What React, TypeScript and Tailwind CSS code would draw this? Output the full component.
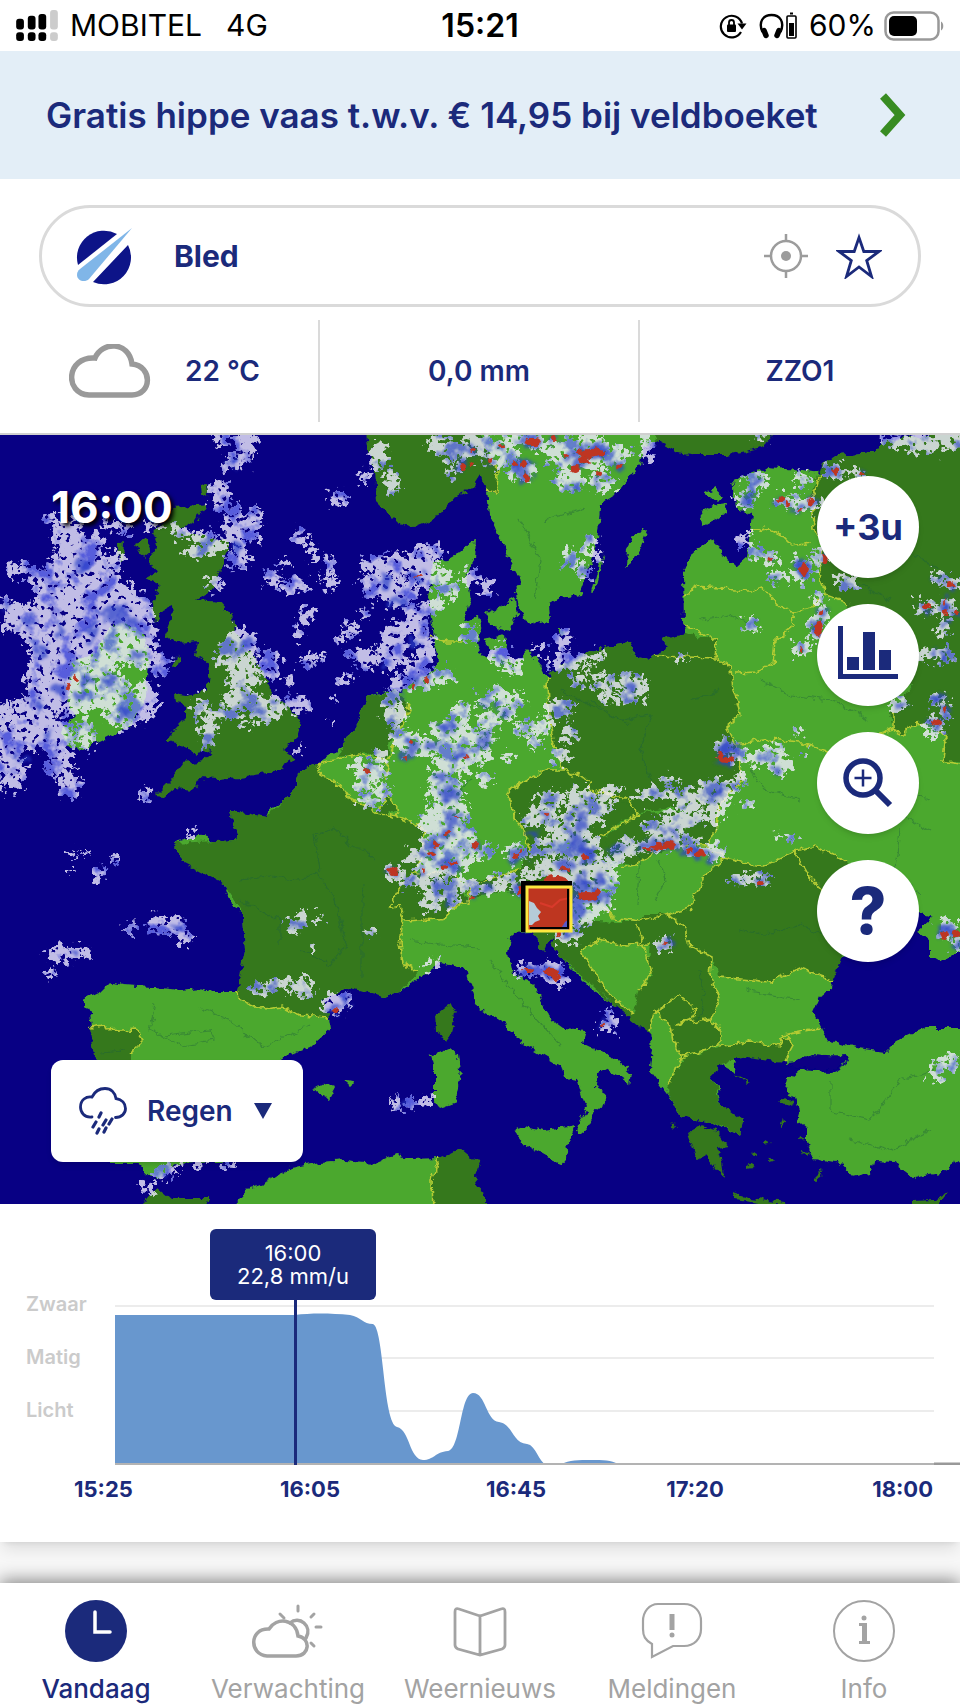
import React, { useState } from "react";

type Blob = [number, number, number, number];

const LAND = "#4ba82f";
const LAND_DARK = "#34781f";

// Coastline of the continent, drawn in map coordinates
const MAINLAND =
  "M990,430 885,440 875,452 840,455 822,462 820,474 795,470 770,467 732,480 735,507 752,515 747,557 737,566 727,560 713,538 692,552 683,573 684,623 687,637 662,639 667,648 650,659 635,657 630,643 607,646 557,668 547,677 542,667 527,650 513,665 503,652 490,657 478,652 474,630 464,620 470,600 466,575 475,560 476,538 460,553 446,561 433,563 428,597 433,630 437,663 433,672 413,683 400,693 388,691 367,697 360,717 347,740 337,752 317,763 298,770 297,787 284,800 270,810 267,817 253,820 242,812 230,810 237,840 213,842 203,835 190,838 173,843 182,862 207,870 216,874 223,883 230,903 243,913 245,950 241,975 237,992 213,992 200,988 180,990 153,987 123,985 110,982 100,992 83,1000 90,1013 93,1035 95,1057 90,1110 110,1163 140,1163 146,1174 157,1179 177,1163 240,1160 265,1110 282,1058 310,1047 330,1030 328,1017 323,1000 347,987 365,990 383,997 400,993 420,978 440,963 455,966 467,973 475,1000 480,1008 500,1020 523,1043 547,1057 562,1066 565,1078 577,1080 582,1096 587,1110 580,1120 577,1132 585,1133 595,1112 607,1103 604,1092 595,1087 596,1074 606,1068 614,1073 630,1085 632,1073 618,1060 583,1043 587,1030 563,1028 552,1020 543,1007 538,990 530,982 512,973 508,953 512,933 533,932 542,952 550,937 560,957 575,972 590,987 612,1003 630,1015 652,1033 652,1050 650,1070 670,1097 680,1117 697,1120 713,1123 722,1128 740,1135 743,1120 730,1112 720,1103 718,1090 713,1077 713,1066 720,1063 736,1072 732,1058 747,1057 780,1055 785,1063 798,1062 813,1055 830,1056 847,1055 850,1062 830,1072 800,1070 788,1080 785,1093 796,1098 800,1110 797,1120 807,1128 807,1143 815,1158 823,1160 840,1163 853,1177 870,1173 873,1162 893,1163 913,1178 940,1173 960,1160 990,1160 990,1028 927,1028 912,1033 897,1040 885,1052 857,1048 830,1042 820,1027 813,1013 820,997 830,990 833,967 842,957 870,950 890,930 920,913 933,917 917,930 930,940 930,957 940,963 957,952 990,952Z";

const LIGHT_ISLANDS = [
  // Scandinavia
  "M480,435 490,463 498,470 497,493 487,492 490,515 502,543 513,567 522,583 515,592 523,618 535,624 550,621 549,604 560,598 580,595 588,573 592,560 597,540 600,510 602,503 615,495 628,480 640,465 643,447 655,440 655,430 480,430Z",
  "M647,530 635,533 627,547 626,567 632,562 641,546Z",
  "M604,553 596,572 591,592 595,590Z",
  "M727,504 712,506 700,513 703,527 714,521 725,513Z",
  "M715,488 705,493 711,497 717,502 723,495Z",
  // Danish islands
  "M500,606 515,598 517,615 510,630 490,625 487,612Z",
  "M462,622 478,617 481,630 476,641 465,638Z",
  "M484,640 505,636 507,648 490,650Z",
  "M557,627 566,631 562,637Z",
  // Ireland
  "M107,630 122,621 143,632 148,660 146,697 137,715 130,727 108,738 83,750 68,745 60,732 76,715 68,705 72,663 95,652Z",
  // Sicily, Sardinia, Balearics
  "M514,1130 522,1127 545,1131 575,1126 567,1145 569,1155 562,1164 548,1158 525,1145Z",
  "M430,1055 440,1052 450,1048 458,1055 460,1070 456,1102 440,1108 434,1100 434,1070Z",
  "M314,1090 326,1083 335,1087 329,1098Z",
  "M343,1080 352,1082 351,1086Z",
  // Algeria
  "M230,1210 250,1188 272,1180 290,1168 320,1162 345,1160 375,1163 395,1155 412,1159 438,1158 432,1180 433,1210Z",
];

const DARK_ISLANDS = [
  "M366,430 368,450 375,470 377,503 397,523 415,527 437,518 453,498 473,487 480,476 487,490 497,493 498,470 490,463 478,430Z",
  "M653,430 655,440 677,452 700,455 727,455 763,447 775,430Z",
  // Great Britain
  "M206,504 190,506 173,508 166,520 152,533 157,547 148,560 157,572 146,578 160,585 152,605 155,625 163,610 172,606 173,618 166,634 178,643 198,641 196,655 210,665 207,690 188,696 175,694 176,704 187,706 187,718 165,740 180,744 196,754 213,750 205,760 183,763 170,780 155,795 165,796 175,788 193,790 200,778 218,779 240,777 267,773 280,768 295,758 283,750 297,737 302,720 283,703 270,697 268,680 253,657 240,637 235,630 233,617 220,602 197,600 213,590 220,570 227,553 230,540 205,538 177,530 195,522Z",
  "M118,545 124,540 123,560 119,562Z",
  "M135,543 146,538 150,550 143,556Z",
  "M176,658 181,657 177,667 172,668Z",
  "M201,485 207,483 208,495 202,497Z",
  // Corsica
  "M452,1003 456,1012 452,1035 446,1043 438,1030 437,1015Z",
  // Tunisia and Morocco
  "M438,1158 450,1153 460,1148 472,1158 480,1160 474,1175 476,1187 486,1195 486,1210 433,1210 432,1180Z",
  "M140,1210 147,1198 157,1187 170,1198 210,1198 205,1210Z",
  // Peloponnese and Aegean
  "M687,1133 700,1126 716,1130 722,1140 730,1146 718,1148 722,1163 724,1178 712,1163 706,1155 697,1160Z",
  "M733,1193 750,1198 785,1202 783,1206 735,1200Z",
  "M785,1097 793,1103 786,1106 779,1102Z",
  "M782,1118 784,1128 780,1126Z",
  "M735,1075 750,1082 746,1084Z",
  "M672,1122 677,1128 671,1127Z",
  "M752,1150 757,1154 751,1156Z",
  "M770,1158 776,1161 769,1163Z",
  "M765,1140 770,1143 764,1144Z",
  "M748,1165 753,1168 747,1169Z",
  "M803,1150 811,1152 804,1154Z",
  "M800,1136 806,1139 799,1140Z",
  "M824,1170 818,1182 814,1180Z",
  "M948,1192 935,1200 912,1201 912,1208 936,1208Z",
];

// Every second country is shaded darker
const DARK_COUNTRIES = [
  "M990,430 885,440 875,452 840,455 822,462 817,478 810,500 814,530 822,545 820,570 826,595 848,603 846,640 870,680 912,686 900,705 890,712 893,730 903,735 910,725 935,724 945,740 943,760 990,763Z",
  "M367,697 395,691 408,703 405,722 396,730 388,745 388,760 368,752 337,757 347,740 360,717Z",
  "M317,763 320,774 343,787 352,800 367,806 376,813 398,817 425,829 423,855 415,873 400,888 388,908 400,905 403,920 400,944 403,962 418,972 400,993 383,997 347,987 323,1000 328,1017 300,1015 283,1007 262,1009 240,1000 237,992 245,950 243,913 223,883 182,862 173,843 237,840 230,810 267,817 297,787 298,770Z",
  "M400,888 415,873 450,872 462,885 468,903 450,908 442,920 424,919 404,920 400,905 388,908Z",
  "M462,882 495,876 520,870 523,858 528,838 560,850 590,845 606,838 614,850 610,872 600,888 598,905 540,903 505,890 470,898Z",
  "M508,792 525,780 548,770 565,770 590,780 592,795 600,790 625,798 640,815 620,822 606,837 590,845 562,842 540,850 525,835 513,815Z",
  "M606,837 625,822 640,813 700,810 716,815 716,830 707,847 680,845 655,853 635,865 612,862Z",
  "M547,677 557,668 607,646 630,643 635,657 650,659 667,648 662,639 687,634 717,640 715,656 731,668 733,690 741,715 726,728 735,745 742,780 720,805 716,815 672,808 640,812 600,793 592,795 590,780 563,770 553,740 548,710Z",
  "M724,858 762,866 778,860 800,850 815,845 845,862 850,900 845,930 842,957 833,980 800,968 770,982 720,977 712,957 690,946 686,928 668,914 690,908 705,875Z",
  "M540,930 585,920 615,922 640,922 645,914 668,914 686,928 690,946 712,957 710,975 720,997 711,1018 720,1030 720,1045 680,1058 672,1035 655,1012 650,1033 612,1003 560,957 548,935Z",
  "M667,1090 682,1058 720,1047 750,1041 780,1047 784,1035 793,1045 784,1062 747,1057 720,1063 713,1077 720,1103 743,1120 740,1135 713,1123 680,1117Z",
  "M90,1027 104,1025 106,1031 135,1029 143,1040 130,1053 130,1150 100,1150 95,1057Z",
  "M533,932 548,932 552,937 542,952Z",
  "M376,812 388,795 396,808 388,815Z",
];

const LIGHT_COUNTRIES = [
  "M580,950 598,940 625,945 650,944 648,960 653,975 640,990 632,1014 605,990Z",
  "M650,1030 655,1012 670,1022 673,1040 682,1058 668,1088 650,1070 652,1050Z",
];

const BORDERS = [
  "M750,532 765,527 782,536 792,546 810,543",
  "M684,595 697,587 720,589 750,591 760,587 775,600 788,612 812,608 820,598",
  "M684,625 705,635 717,640M655,656 717,658M735,673 757,672 773,663 775,640 795,625 792,612",
  "M735,745 770,739 800,742 830,752 860,740 893,730",
  "M655,1012 667,1004 678,995 696,1010 690,1020 675,1025M675,1025 712,1018",
  "M794,850 808,875 825,893",
  "M637,925 645,952 652,972 640,990",
  "M430,635 445,642 460,642",
  "M409,703 404,725 395,742 388,760 385,780",
  "M602,905 612,918 640,922 668,914",
];

const RIVERS =
  "M240,880 270,877 300,880 320,870 315,835 335,828 350,845 365,850 375,860M300,950 330,965 345,945 335,900 315,870M362,980 362,900 365,885M155,1003 150,1030 180,1045 215,1040 210,1030 165,1035M200,1008 230,1020 262,1046 290,1035 310,1025M410,940 440,945 480,948M470,780 450,800 465,820M520,520 540,560 535,600M545,520 585,508M590,700 620,720 650,715 640,750 655,790M560,690 600,710 630,725M690,700 720,690M760,680 790,695 830,700 870,720M700,620 730,615 750,625M750,770 765,790 800,800M840,790 880,805 930,830M900,830 895,870 920,895M870,780 890,790 930,800M640,850 637,905M660,860 665,880 655,900M740,930 765,935 800,925 825,935M700,970 705,1010 695,1020M745,990 800,1000M830,1080 830,1110 870,1120 900,1080 940,1070M850,1140 890,1150 930,1130M490,960 520,1000 560,1045M240,900 280,920 280,945M100,1052 125,1050M855,500 880,520 910,515 905,550 940,570M850,580 890,600";

const LIGHT_RAIN: Blob[] = [
  // Ireland and the Atlantic
  [52, 520, 8, 5], [68, 535, 14, 16], [90, 545, 14, 9], [20, 568, 14, 7], [40, 578, 12, 8], [78, 568, 30, 24], [115, 560, 7, 8],
  [60, 600, 26, 26], [95, 595, 34, 26], [5, 605, 9, 9], [25, 620, 20, 16], [125, 615, 26, 26], [60, 640, 34, 30], [100, 640, 30, 28],
  [140, 640, 16, 28], [50, 675, 24, 28], [75, 690, 28, 24], [105, 690, 22, 22], [160, 665, 9, 10], [145, 700, 12, 18], [125, 712, 18, 16],
  [35, 710, 22, 16], [20, 735, 24, 18], [50, 735, 24, 14], [5, 715, 6, 16], [10, 770, 14, 22], [58, 760, 12, 16], [70, 785, 9, 14], [85, 735, 8, 14],
  // Scotland
  [222, 438, 9, 4], [246, 445, 10, 14], [235, 462, 12, 6], [220, 495, 10, 12], [230, 508, 8, 6], [255, 513, 7, 7], [240, 530, 18, 14], [180, 532, 8, 7],
  [205, 537, 14, 5], [195, 552, 10, 6], [215, 548, 12, 6], [238, 558, 10, 10], [214, 582, 8, 6], [110, 525, 10, 4], [155, 526, 9, 4], [125, 530, 5, 5],
  // England
  [240, 640, 16, 10], [228, 655, 12, 10], [250, 652, 8, 10], [243, 675, 16, 14], [240, 700, 16, 12], [258, 705, 14, 10], [270, 665, 10, 14], [225, 713, 12, 5],
  [280, 705, 12, 7], [290, 680, 6, 5], [300, 705, 10, 9], [200, 705, 6, 10], [208, 730, 8, 16], [265, 715, 14, 6], [246, 724, 4, 3],
  // North Sea
  [338, 497, 8, 7], [300, 536, 5, 9], [314, 553, 4, 7], [330, 565, 6, 10], [272, 578, 9, 9], [295, 585, 12, 8], [284, 562, 5, 4], [330, 583, 7, 6],
  [307, 615, 8, 8], [299, 634, 5, 4], [310, 659, 10, 6], [342, 680, 6, 5], [335, 697, 3, 3], [298, 749, 3, 3], [333, 722, 2, 2],
  [375, 565, 14, 9], [400, 565, 20, 12], [428, 555, 14, 10], [375, 585, 14, 12], [397, 592, 20, 13], [425, 575, 12, 14], [420, 612, 14, 8], [365, 615, 4, 8],
  [350, 630, 8, 5], [340, 640, 4, 4], [395, 635, 12, 12], [415, 625, 14, 9], [390, 655, 14, 12], [425, 645, 9, 18], [415, 665, 12, 8], [367, 660, 10, 10],
  [352, 653, 6, 4], [400, 683, 10, 8], [425, 678, 14, 9], [445, 675, 8, 6], [440, 575, 12, 8], [450, 590, 10, 8], [470, 577, 8, 7], [436, 605, 6, 7], [470, 635, 7, 8],
  // Norway and Sweden
  [378, 458, 9, 14], [392, 482, 7, 12], [365, 478, 4, 5], [440, 445, 12, 9], [460, 450, 16, 9], [452, 470, 6, 8], [480, 440, 14, 10], [500, 455, 16, 11],
  [520, 440, 20, 7], [523, 470, 14, 9], [545, 445, 12, 8], [565, 455, 18, 12], [585, 445, 24, 10], [600, 460, 20, 8], [570, 480, 14, 12], [602, 482, 12, 9],
  [620, 455, 9, 8], [645, 440, 6, 6], [648, 455, 5, 8], [590, 545, 6, 10], [570, 560, 6, 9], [584, 572, 8, 7], [596, 555, 4, 5], [486, 588, 7, 8],
  // Baltics
  [757, 482, 12, 7], [745, 500, 10, 7], [802, 478, 6, 7], [785, 502, 10, 6], [808, 504, 14, 7], [835, 472, 9, 8], [855, 473, 9, 4], [745, 540, 5, 7],
  [757, 553, 10, 6], [770, 560, 7, 7], [778, 576, 8, 6], [803, 570, 10, 12], [820, 555, 8, 8], [846, 582, 12, 6], [820, 597, 6, 5], [822, 615, 6, 8],
  [816, 628, 7, 12], [801, 648, 8, 7], [751, 625, 8, 6], [760, 437, 6, 3], [895, 440, 12, 6], [925, 443, 30, 8], [950, 440, 16, 8],
  // Right edge
  [950, 583, 8, 6], [938, 576, 5, 5], [924, 607, 10, 6], [945, 608, 9, 9], [943, 628, 6, 9], [930, 655, 10, 7], [945, 655, 7, 7], [898, 705, 9, 5],
  [938, 700, 7, 6], [945, 712, 5, 6], [936, 723, 9, 7], [933, 735, 4, 4],
  // Denmark to Poland
  [500, 655, 9, 10], [512, 668, 12, 6], [540, 648, 5, 4], [562, 640, 9, 9], [570, 660, 12, 9], [555, 665, 6, 5], [593, 658, 12, 4], [578, 680, 9, 5],
  [605, 683, 14, 7], [633, 688, 14, 14], [608, 697, 9, 5], [560, 708, 16, 9], [568, 735, 8, 8], [560, 755, 9, 7], [585, 668, 4, 3],
  // Germany
  [392, 700, 9, 9], [395, 715, 12, 10], [398, 735, 9, 8], [410, 745, 12, 10], [425, 750, 9, 7], [445, 730, 14, 8], [460, 715, 9, 12], [465, 735, 12, 10],
  [440, 745, 14, 8], [455, 760, 20, 14], [470, 755, 10, 12], [440, 775, 12, 8], [485, 700, 8, 6], [500, 695, 10, 8], [515, 700, 10, 8], [490, 720, 12, 9],
  [508, 712, 9, 6], [485, 740, 8, 8], [525, 728, 10, 7], [543, 727, 8, 8], [485, 755, 6, 6], [535, 742, 6, 6], [485, 780, 7, 6], [508, 758, 5, 4],
  [379, 756, 7, 6], [372, 772, 12, 9], [362, 782, 9, 8], [380, 790, 9, 8], [370, 800, 12, 6], [358, 765, 6, 5],
  [445, 790, 18, 14], [450, 810, 20, 14], [435, 825, 18, 12], [455, 835, 18, 14], [440, 848, 20, 12], [425, 855, 16, 10], [455, 860, 18, 10], [475, 850, 9, 8],
  [435, 870, 18, 8], [420, 880, 10, 8], [440, 890, 16, 9], [460, 885, 10, 7], [430, 905, 9, 7], [450, 900, 8, 5], [475, 888, 8, 6], [395, 872, 9, 6], [404, 882, 7, 5],
  [515, 853, 10, 9], [487, 850, 6, 7], [490, 888, 10, 6], [505, 880, 14, 5], [520, 888, 8, 6],
  // Czech to the Alps
  [540, 815, 14, 8], [550, 800, 12, 9], [560, 830, 12, 12], [580, 800, 14, 12], [578, 820, 14, 14], [595, 815, 9, 9], [605, 800, 8, 9], [612, 790, 8, 4],
  [545, 848, 14, 7], [575, 845, 20, 14], [590, 850, 12, 12], [555, 868, 22, 9], [530, 875, 10, 5], [585, 875, 22, 16], [605, 880, 12, 18], [595, 900, 18, 14],
  [580, 915, 14, 12], [570, 935, 12, 8], [560, 935, 6, 5], [530, 820, 8, 5], [615, 860, 10, 6], [625, 845, 8, 6],
  [645, 795, 9, 5], [670, 780, 8, 5], [660, 793, 16, 5], [690, 800, 14, 12], [710, 790, 12, 10], [725, 790, 10, 8], [740, 778, 6, 7], [720, 805, 8, 8], [685, 815, 10, 5],
  [655, 828, 14, 8], [675, 822, 12, 9], [690, 818, 14, 8], [712, 815, 8, 8], [650, 845, 22, 5], [670, 838, 18, 6], [695, 848, 16, 6], [715, 853, 9, 8], [622, 852, 12, 4],
  [725, 748, 10, 8], [737, 755, 8, 6], [757, 757, 14, 6], [775, 750, 8, 6], [780, 765, 14, 8], [745, 805, 6, 3], [799, 731, 5, 3], [804, 755, 3, 2], [680, 660, 4, 3],
  // Balkans
  [737, 881, 8, 4], [750, 875, 6, 3], [760, 881, 9, 6], [665, 943, 9, 6], [785, 836, 5, 3], [793, 840, 3, 3], [610, 1020, 7, 10], [604, 1027, 4, 4],
  [528, 970, 12, 6], [552, 970, 12, 9], [560, 980, 6, 5], [518, 975, 4, 3], [948, 930, 10, 9], [958, 945, 5, 6], [938, 1072, 7, 8], [950, 1062, 9, 8],
  // France, Spain and the sea
  [83, 852, 3, 2], [99, 873, 7, 6], [113, 860, 2, 4], [74, 856, 2, 2], [70, 871, 2, 2], [160, 925, 12, 8], [175, 927, 12, 9], [185, 937, 8, 6], [130, 928, 5, 5],
  [60, 955, 12, 9], [78, 952, 10, 7], [50, 973, 5, 5], [190, 831, 5, 3], [295, 925, 7, 6], [302, 917, 4, 4], [317, 918, 4, 5], [372, 932, 3, 4], [314, 949, 3, 3],
  [262, 988, 10, 5], [280, 985, 12, 5], [300, 986, 12, 7], [307, 993, 6, 4], [335, 1005, 12, 7], [346, 1000, 8, 6], [330, 997, 6, 5], [432, 962, 4, 6],
  [403, 1103, 12, 5], [425, 1101, 7, 4], [148, 1188, 8, 6], [165, 1172, 9, 5], [175, 1166, 6, 3], [200, 1164, 5, 3], [228, 1164, 7, 3], [146, 795, 4, 7],
];

const MODERATE_RAIN: Blob[] = [
  [35, 643, 5, 6], [82, 566, 8, 5], [115, 612, 14, 7], [125, 622, 12, 5], [92, 632, 4, 12], [60, 628, 3, 10], [85, 680, 8, 5], [80, 695, 8, 5], [42, 655, 6, 6],
  [60, 690, 8, 5], [40, 705, 6, 5], [20, 760, 7, 4], [48, 735, 4, 5], [123, 713, 5, 6], [30, 620, 5, 5], [5, 605, 4, 5], [135, 655, 8, 4], [110, 680, 4, 8],
  [233, 463, 5, 3], [247, 642, 6, 5], [275, 703, 6, 3], [238, 546, 5, 4], [418, 577, 6, 5], [395, 602, 10, 4], [385, 580, 5, 10], [413, 642, 4, 7], [385, 665, 4, 4],
  [415, 683, 5, 7], [427, 680, 5, 3], [400, 697, 4, 3], [409, 742, 6, 5], [405, 757, 6, 5], [412, 749, 5, 4], [448, 727, 10, 4], [462, 757, 8, 5], [368, 771, 5, 4],
  [440, 775, 9, 4], [432, 746, 6, 3], [450, 795, 10, 8], [450, 820, 6, 10], [458, 818, 4, 5], [447, 832, 5, 9], [435, 845, 6, 5], [432, 855, 8, 5], [450, 865, 12, 6], [474, 847, 6, 5],
  [393, 871, 6, 4], [436, 885, 5, 4], [448, 900, 5, 5], [472, 897, 4, 3], [423, 873, 4, 3], [486, 890, 4, 3],
  [462, 463, 6, 6], [472, 450, 5, 4], [493, 462, 5, 4], [502, 445, 5, 4], [521, 466, 9, 6], [527, 477, 6, 6], [530, 442, 14, 5], [553, 440, 4, 4], [577, 466, 10, 6],
  [590, 453, 17, 7], [567, 456, 4, 3], [620, 466, 4, 4], [599, 478, 4, 5], [574, 487, 3, 3], [591, 540, 3, 4], [570, 565, 2, 3], [584, 570, 3, 3],
  [748, 500, 6, 5], [757, 482, 5, 3], [781, 500, 5, 3], [788, 504, 4, 4], [799, 509, 6, 3], [811, 502, 6, 5], [835, 471, 4, 5], [862, 474, 3, 2], [770, 559, 3, 4],
  [778, 578, 5, 3], [804, 568, 8, 8], [824, 559, 4, 4], [822, 613, 4, 4], [818, 628, 5, 9], [801, 648, 4, 4], [751, 625, 3, 3],
  [950, 584, 5, 5], [938, 577, 4, 3], [925, 608, 7, 4], [945, 605, 5, 7], [957, 613, 4, 4], [944, 622, 3, 5], [945, 655, 3, 4], [932, 652, 2, 3], [898, 705, 7, 3], [938, 699, 5, 4],
  [945, 710, 4, 5], [936, 723, 6, 4], [725, 752, 7, 6], [727, 760, 9, 6], [735, 748, 4, 4], [760, 759, 5, 4], [777, 770, 5, 3], [485, 735, 6, 7], [483, 745, 4, 4], [494, 705, 3, 3], [506, 713, 5, 4], [484, 703, 3, 3],
  [500, 660, 5, 3], [633, 688, 5, 5], [517, 855, 8, 7], [532, 834, 6, 4], [547, 815, 4, 3], [580, 822, 5, 9], [577, 843, 9, 10], [587, 855, 7, 8], [565, 866, 12, 4],
  [580, 885, 7, 12], [577, 910, 9, 16], [595, 897, 16, 6], [600, 880, 5, 9], [610, 850, 4, 3], [567, 933, 5, 3], [518, 890, 6, 6], [487, 891, 4, 4],
  [645, 847, 10, 4], [662, 845, 16, 6], [672, 832, 9, 3], [690, 850, 8, 5], [700, 853, 8, 6], [712, 857, 4, 4], [619, 848, 8, 2], [690, 820, 5, 3], [717, 795, 5, 4],
  [760, 882, 5, 4], [743, 879, 3, 2], [667, 943, 7, 3], [604, 1024, 3, 3], [527, 970, 8, 4], [552, 972, 9, 6], [947, 932, 9, 7], [957, 945, 4, 4],
  [335, 1008, 6, 5], [345, 1003, 4, 4], [178, 928, 4, 3], [75, 953, 3, 3], [405, 1103, 4, 3], [165, 1176, 4, 3],
];

const HEAVY_RAIN: Blob[] = [
  [76, 677, 2, 3], [69, 686, 2, 2], [418, 577, 4, 1], [427, 680, 3, 2], [414, 687, 2, 2], [410, 742, 2, 2], [406, 758, 2, 2], [368, 771, 3, 3], [466, 756, 2, 2],
  [463, 467, 3, 3], [470, 463, 2, 2], [472, 450, 2, 2], [502, 446, 3, 2], [490, 460, 2, 2], [515, 463, 3, 3], [523, 465, 3, 5], [527, 477, 4, 4], [533, 442, 9, 4], [554, 438, 3, 3],
  [590, 453, 14, 5], [583, 460, 5, 4], [575, 469, 5, 4], [599, 474, 2, 3], [619, 467, 2, 3], [567, 456, 2, 2], [781, 500, 3, 2], [787, 504, 2, 3], [812, 502, 4, 3], [799, 510, 3, 1],
  [835, 472, 2, 4], [862, 474, 3, 1], [804, 569, 4, 7], [825, 559, 3, 4], [822, 613, 3, 2], [818, 629, 4, 8], [801, 649, 2, 2], [770, 558, 2, 2],
  [950, 584, 4, 3], [926, 607, 4, 2], [946, 612, 2, 2], [957, 613, 2, 3], [944, 601, 1, 3], [936, 723, 5, 3], [945, 709, 2, 3], [727, 760, 8, 3], [720, 756, 3, 4],
  [393, 871, 5, 4], [432, 854, 4, 2], [436, 844, 3, 3], [447, 833, 2, 2], [458, 817, 2, 1], [444, 867, 3, 3], [454, 864, 4, 2], [475, 846, 3, 2], [472, 897, 2, 2], [423, 872, 2, 2],
  [516, 856, 4, 3], [520, 851, 2, 2], [547, 815, 2, 2], [585, 857, 3, 2], [566, 869, 5, 2], [555, 880, 12, 4], [520, 890, 3, 5], [587, 896, 10, 5], [597, 892, 4, 3], [559, 934, 2, 3],
  [658, 847, 8, 3], [670, 845, 6, 4], [647, 849, 4, 1], [689, 851, 3, 2], [700, 853, 4, 3], [761, 883, 3, 2], [666, 942, 3, 1], [603, 1025, 2, 2],
  [528, 970, 5, 2], [551, 972, 7, 4], [556, 977, 4, 3], [945, 935, 5, 4], [956, 933, 4, 4], [335, 1010, 3, 2],
];

interface RainLayerProps {
  cells: Blob[];
  fill: string;
  filter: string;
  opacity?: number;
  grow?: number;
}

function RainLayer({ cells, fill, filter, opacity = 1, grow = 0 }: RainLayerProps) {
  return (
    <g fill={fill} filter={filter} opacity={opacity}>
      {cells.map(([cx, cy, rx, ry], i) => (
        <ellipse key={i} cx={cx} cy={cy} rx={rx + grow} ry={ry + grow} />
      ))}
    </g>
  );
}

function RadarMap() {
  return (
    <svg viewBox="0 435 960 769" className="block h-auto w-full bg-[#080084]" role="img" aria-label="Buienradar Europa">
      <defs>
        <filter id="coast" filterUnits="userSpaceOnUse" x="-10" y="425" width="990" height="790">
          <feTurbulence type="fractalNoise" baseFrequency="0.12" numOctaves="3" seed="4" />
          <feDisplacementMap in="SourceGraphic" scale="9" xChannelSelector="R" yChannelSelector="G" />
        </filter>
        <filter id="ragged" filterUnits="userSpaceOnUse" x="-10" y="425" width="990" height="790" colorInterpolationFilters="sRGB">
          <feTurbulence type="fractalNoise" baseFrequency="0.14" numOctaves="3" seed="11" result="noise" />
          <feDisplacementMap in="SourceGraphic" in2="noise" scale="24" xChannelSelector="R" yChannelSelector="G" result="shape" />
          <feTurbulence type="fractalNoise" baseFrequency="0.18" numOctaves="2" seed="7" />
          <feColorMatrix type="matrix" values="0 0 0 0 0  0 0 0 0 0  0 0 0 0 0  16 0 0 0 -5" result="holes" />
          <feComposite in="shape" in2="holes" operator="in" result="cells" />
          <feTurbulence type="fractalNoise" baseFrequency="0.05" numOctaves="4" seed="31" />
          <feColorMatrix type="matrix" values="0 0 0 0 0.42  0 0 0 0 0.46  0 0 0 0 0.95  0 5 0 0 -2.500" />
          <feComposite in2="cells" operator="in" result="tint" />
          <feMerge>
            <feMergeNode in="cells" />
            <feMergeNode in="tint" />
          </feMerge>
        </filter>
        <filter id="soft" filterUnits="userSpaceOnUse" x="-10" y="425" width="990" height="790">
          <feTurbulence type="fractalNoise" baseFrequency="0.12" numOctaves="3" seed="23" result="noise" />
          <feDisplacementMap in="SourceGraphic" in2="noise" scale="18" xChannelSelector="R" yChannelSelector="G" />
          <feGaussianBlur stdDeviation="1.700" />
        </filter>
        <filter id="core" filterUnits="userSpaceOnUse" x="-10" y="425" width="990" height="790">
          <feTurbulence type="fractalNoise" baseFrequency="0.15" numOctaves="2" seed="5" result="noise" />
          <feDisplacementMap in="SourceGraphic" in2="noise" scale="8" xChannelSelector="R" yChannelSelector="G" />
        </filter>
      </defs>

      <g filter="url(#coast)">
        <path d={MAINLAND} fill={LAND} />
        {LIGHT_ISLANDS.map((d) => (
          <path key={d} d={d} fill={LAND} />
        ))}
        {DARK_ISLANDS.map((d) => (
          <path key={d} d={d} fill={LAND_DARK} />
        ))}
        {DARK_COUNTRIES.map((d) => (
          <path key={d} d={d} fill={LAND_DARK} />
        ))}
        {LIGHT_COUNTRIES.map((d) => (
          <path key={d} d={d} fill={LAND} />
        ))}
        <path d="M787,1066 810,1054 845,1056 848,1062 828,1071 808,1069Z" fill="#080084" />
        <g fill="none" stroke="#b5cc33" strokeWidth="1.6">
          <path d="M317,763 335,760 360,753 385,760M317,763 320,774 343,787 352,800 367,806 376,813 398,817 425,829 423,855 415,873 400,888 388,908 400,905 403,920 400,944 403,962 418,972" />
          <path d="M237,992 240,1000 262,1009 283,1007 300,1015 328,1017M90,1027 104,1025 106,1031 135,1029 143,1040 130,1053M404,920 424,919 442,920 450,908 468,903 470,885 520,870M415,873 450,872 462,882" />
          <path d="M508,792 525,780 548,770 565,770 590,780 592,795 600,790 625,798 640,815M508,792 513,815 525,835 528,850M547,677 548,710 553,740 563,770M600,837 625,822 640,813" />
          <path d="M717,640 715,656 731,668 733,690 741,715 726,728 735,745 742,780 720,805 716,830 707,847 724,858 762,866 800,850 815,845 845,862M707,847 680,845M635,865 655,853M620,868 635,865" />
          <path d="M724,858 705,875 690,908 668,914 686,928 690,946 712,957 710,975 720,997 711,1018 720,1030 720,1045 680,1058 668,1088M720,977 770,982 800,968 833,980M720,1047 750,1041 780,1047 784,1035 820,1028M784,1035 793,1045 784,1062" />
          <path d="M580,950 598,940 625,945 650,944M580,950 605,990 632,1014M650,1030 655,1012 670,1022 673,1040 682,1058M820,474 812,500 814,530 822,545 820,570 826,595 848,603M893,712 893,730 903,735 910,725 935,724 945,740 943,760 960,763M433,1210 432,1180 438,1158" />
          <path d="M497,493 498,470 490,463M497,493 487,490M376,812 388,795 396,808 398,817" />
          {BORDERS.map((d) => (
            <path key={d} d={d} />
          ))}
        </g>
        <path d={RIVERS} fill="none" stroke="#1f5c3c" strokeWidth="1.2" opacity="0.4" />
      </g>

      <RainLayer cells={LIGHT_RAIN} fill="#f0edff" filter="url(#ragged)" opacity={0.8} grow={1} />
      <RainLayer cells={MODERATE_RAIN} fill="#2a3fc9" filter="url(#soft)" opacity={0.7} />
      <RainLayer cells={HEAVY_RAIN} fill="#be3620" filter="url(#core)" />

      {/* Selected location */}
      <rect x="528" y="888" width="42" height="42" fill="#be3620" />
      <path d="M529,901 534,903 537,908 541,912 538,916 540,920 535,922 532,925H529Z" fill="#b5cbd8" />
      <path d="M560,930 565,922 568,920V930Z" fill="#5a57c8" />
      <path d="M540,903 552,907 560,900 570,898" fill="none" stroke="#d93a2b" strokeWidth="2" />
      <path d="M521,881H572V886H526V932H521Z" />
      <path d="M568,889V928H530" fill="none" stroke="#000" strokeWidth="2" />
      <rect x="527" y="887" width="44" height="44" fill="none" stroke="#fbe93f" strokeWidth="3" />
    </svg>
  );
}

function StatusBar() {
  return (
    <div className="flex h-[51px] items-center bg-white px-4 text-[30px] text-black">
      <div className="flex flex-1 items-center">
        <svg width="42" height="31" viewBox="0 0 43 32" className="mr-3" aria-hidden="true">
          <rect x="0" y="9" width="8" height="11" rx="3" />
          <rect x="12" y="6" width="8" height="14" rx="3" />
          <rect x="23" y="4" width="8" height="16" rx="3" />
          <rect x="35" y="0" width="8" height="20" rx="3" fill="#ccc" />
          <rect x="0" y="23" width="8" height="9" rx="3" />
          <rect x="12" y="23" width="8" height="9" rx="3" />
          <rect x="23" y="23" width="8" height="9" rx="3" />
          <rect x="35" y="23" width="8" height="9" rx="3" fill="#ccc" />
        </svg>
        <span>MOBITEL</span>
        <span className="ml-6">4G</span>
      </div>
      <span className="text-[32px] font-semibold">15:21</span>
      <div className="flex flex-1 items-center justify-end">
        <svg width="28" height="26" viewBox="0 0 28 26" className="mr-3" fill="none" stroke="#000" strokeWidth="2.2" aria-hidden="true">
          <path d="M22 19A10.800 10.800 0 1 1 23 10.500" />
          <path d="M18.500 10.500h9l-4.500 6z" fill="#000" stroke="none" />
          <rect x="8" y="11.500" width="9" height="7.500" rx="1" fill="#000" stroke="none" />
          <path d="M10 12V9.500a2.500 2.500 0 0 1 5 0V12" strokeWidth="1.800" />
        </svg>
        <svg width="38" height="28" viewBox="0 0 38 28" className="mr-3" fill="none" stroke="#000" strokeWidth="2.400" aria-hidden="true">
          <path d="M3.500 20C-1 10 4 3 12.500 3S26 10 21.500 20" />
          <path d="M5 18.500l2 5M20 18.500l-2 5" strokeWidth="5.500" strokeLinecap="round" />
          <rect x="28" y="4" width="9" height="22" rx="1" strokeWidth="1.600" />
          <path d="M31 1.500h3" strokeWidth="2" />
          <rect x="30" y="11" width="5" height="13" fill="#000" stroke="none" />
        </svg>
        <span>60%</span>
        <svg width="60" height="30" viewBox="0 0 60 30" className="ml-2" aria-hidden="true">
          <rect x="1.500" y="1.500" width="53" height="27" rx="8" fill="none" stroke="#999" strokeWidth="2.500" />
          <rect x="5" y="5" width="28" height="20" rx="5" />
          <path d="M57 10.500c3 1 3 8 0 9z" fill="#999" />
        </svg>
      </div>
    </div>
  );
}

function SearchBar() {
  const [place, setPlace] = useState("Bled");

  return (
    <div className="flex h-[102px] items-center rounded-full border-[3px] border-[#dadada] pr-9 pl-[34px]">
      <svg width="58" height="58" viewBox="0 0 58 58" aria-hidden="true">
        <path d="M41 7A27 27 0 0 0 2 38Z" fill="#0d1488" />
        <path d="M52 18A27 27 0 0 1 17 55Z" fill="#0d1488" />
        <path d="M56 1 13 52C9 56 1 54 1 48 1 45 2 44 4 42Z" fill="#80b6e8" />
      </svg>
      <input
        aria-label="Locatie"
        value={place}
        onChange={(e) => setPlace(e.target.value)}
        className="ml-10 min-w-0 flex-1 bg-transparent text-[30px] font-bold outline-none"
      />
      <button aria-label="Huidige locatie" className="mr-7">
        <svg width="44" height="44" viewBox="0 0 44 44" fill="none" stroke="#9c9c9c" strokeWidth="2.500" className="block">
          <circle cx="22" cy="22" r="15" />
          <circle cx="22" cy="22" r="5" fill="#9c9c9c" stroke="none" />
          <path d="M22 0v8M22 36v8M0 22h8M36 22h8" />
        </svg>
      </button>
      <button aria-label="Favoriet">
        <svg width="46" height="46" viewBox="0 0 46 46" fill="none" stroke="#1b2a7b" strokeWidth="2.800" className="block">
          <path d="M23 4.500 27.800 18.500H43L30.700 27.500 35.500 43.500 23 34 10.500 43.500 15.300 27.500 3 18.500H18.200Z" />
        </svg>
      </button>
    </div>
  );
}

function MapControls() {
  const round = "flex size-[102px] items-center justify-center rounded-full bg-white shadow-md";

  return (
    <div className="absolute top-[41px] right-[41px] flex flex-col gap-[26px]">
      <button className={`${round} text-[36px] font-bold`}>+3u</button>
      <button className={round} aria-label="Grafiek">
        <svg width="60" height="54" viewBox="0 0 60 54" fill="#1b2a7b" className="-mt-1">
          <path d="M0 0h5v48h55v5H0z" />
          <path d="M9 31h12v13H9zM25 6h12v38H25zM41 24h12v20H41z" />
        </svg>
      </button>
      <button className={round} aria-label="Inzoomen">
        <svg width="50" height="50" viewBox="0 0 50 50" fill="none" stroke="#1b2a7b">
          <circle cx="20" cy="20" r="17" strokeWidth="5.500" />
          <path d="M11.500 20h17M20 11.500v17" strokeWidth="2.500" />
          <path d="M32 32l15 15" strokeWidth="6" />
        </svg>
      </button>
      <button className={`${round} text-[64px] font-extrabold`}>?</button>
    </div>
  );
}

function LayerSelect() {
  return (
    <div className="absolute bottom-[42px] left-[51px] flex h-[102px] items-center rounded-xl bg-white pr-6 pl-7 shadow-md">
      <svg width="48" height="48" viewBox="0 0 48 48" fill="none" stroke="#1b2a7b" strokeWidth="2.800" strokeLinecap="round" aria-hidden="true">
        <path d="M13 30C5 31 1.500 25 1.500 20 1.500 13 7 9 13 10 16 4 21 1.500 26 1.500c6 0 10 4 11 10 6 1 9.500 5 9.500 10 0 5-4 9-10 9" />
        <path d="M22 26l-2 4M17 35l-3 5M27 33l-3 5M33 32l-3 5M20 42l-2 4M27 41l-2 4" strokeWidth="3.200" />
      </svg>
      <select aria-label="Kaartlaag" className="ml-5 w-[132px] appearance-none bg-transparent text-[28px] font-semibold outline-none">
        <option>Regen</option>
      </select>
      <svg width="18" height="16" viewBox="0 0 18 16" className="pointer-events-none absolute right-[31px]" fill="#1b2a7b" aria-hidden="true">
        <path d="M0 0h18L9 16z" />
      </svg>
    </div>
  );
}

function RainChart() {
  return (
    <section className="bg-white pt-[101px] pb-10 shadow-lg">
      <div className="flex">
        <div className="flex w-[115px] flex-col pl-[26px] text-[20px] leading-[22px] font-semibold text-[#cbcbcb]">
          <span className="-mt-3 h-[53px]">Zwaar</span>
          <span className="h-[53px]">Matig</span>
          <span className="h-[53px]">Licht</span>
        </div>
        <div className="relative flex-1">
          <svg viewBox="0 0 845 160" preserveAspectRatio="none" className="block h-[160px] w-full" aria-hidden="true">
            <path d="M0 1H819M0 53H819M0 106H819" stroke="#e6e6e6" strokeWidth="1.500" />
            <path
              d="M0 10H180C195 8 215 8 235 10 246 12 248 19 258 19 269 23 268 118 282 122 295 125 294 154 308 155 319 155 320 147 333 146 346 144 345 88 358 88 371 88 371 116 384 117 398 119 397 138 412 139 421 140 424 158 431 159H0ZM447 159C453 155 465 155 475 155 489 155 496 155 503 159Z"
              fill="#6897ce"
            />
            <path d="M0 159H819" stroke="#b3b3b3" strokeWidth="2" />
            <path d="M819 159H845" stroke="#999" strokeWidth="3" />
          </svg>
          <div className="absolute -top-[76px] left-[95px] flex h-[71px] w-[166px] flex-col items-center justify-center rounded-md bg-[#1b2a7b] text-[22px] leading-[23px] text-white">
            <span>16:00</span>
            <span>22,8 mm/u</span>
          </div>
          <div className="absolute -top-[5px] bottom-0 left-[179px] w-[3px] bg-[#1b2a7b]" />
        </div>
      </div>
      <div className="mt-[11px] grid grid-cols-[40fr_40fr_35fr_40fr_auto] pr-[27px] pl-[74px] text-[22px] leading-[26px] font-bold">
        <span>15:25</span>
        <span>16:05</span>
        <span>16:45</span>
        <span>17:20</span>
        <span>18:00</span>
      </div>
    </section>
  );
}

const tabs = [
  {
    name: "Vandaag",
    icon: (
      <>
        <circle cx="36" cy="31" r="31" fill="#1b2a7b" stroke="none" />
        <path d="M35 12v20h15" stroke="#fff" strokeWidth="3.500" />
      </>
    ),
  },
  {
    name: "Verwachting",
    icon: (
      <>
        <path d="M15 56h29c14 0 15-18 2-20C44 18 24 17 17 29-3 28-3 55 15 56z" strokeWidth="3.500" />
        <path d="M38 23c9-8 23 3 16 15" strokeWidth="3.500" />
        <path d="M46 6v5M28 14l4 4M59 17l3-3M64 27h5M59 43l3 3" strokeWidth="3" />
      </>
    ),
  },
  {
    name: "Weernieuws",
    icon: <path d="M36 16v39M36 16 15 9c-3-1-4 0-4 3v33c0 2 1 3 3 4l22 6 22-6c2-1 3-2 3-4V12c0-3-1-4-4-3z" strokeWidth="2.800" />,
  },
  {
    name: "Meldingen",
    icon: (
      <>
        <path d="M22 4h26c11 0 17 8 17 17v8c0 10-7 17-17 17H37L16 57V44C9 40 7 36 7 29v-8C7 12 13 4 22 4z" strokeWidth="2.200" />
        <path d="M36 14v16" strokeWidth="5" strokeLinecap="butt" />
        <circle cx="36" cy="35" r="2.500" fill="currentColor" stroke="none" />
      </>
    ),
  },
  {
    name: "Info",
    icon: (
      <>
        <circle cx="36" cy="31" r="30" strokeWidth="2" />
        <circle cx="36" cy="18" r="2.500" fill="currentColor" stroke="none" />
        <path d="M31 23h8v18h3v3H31v-3h3V26h-3z" fill="currentColor" stroke="none" />
      </>
    ),
  },
];

function TabBar() {
  const [active, setActive] = useState("Vandaag");

  return (
    <nav className="relative mt-auto grid grid-cols-5 bg-white pt-[17px] pb-[3px] text-[26px] leading-8 text-[#a3a3a3] shadow-[0_-3px_16px_rgba(0,0,0,0.45)]">
      {tabs.map((tab) => (
        <button
          key={tab.name}
          onClick={() => setActive(tab.name)}
          className={`flex flex-col items-center gap-[11px] ${active === tab.name ? "font-medium text-[#1b2a7b]" : ""}`}
        >
          <svg width="72" height="62" viewBox="0 0 72 62" fill="none" stroke="currentColor" strokeLinecap="round" aria-hidden="true">
            {tab.icon}
          </svg>
          <span>{tab.name}</span>
        </button>
      ))}
    </nav>
  );
}

export default function App() {
  return (
    <div className="flex min-h-screen flex-col overflow-hidden bg-[#f7f7f7] font-['Inter','Liberation_Sans',sans-serif] text-[#1b2a7b]">
      <StatusBar />

      <a href="#aanbieding" className="flex h-32 items-center justify-between bg-[#e3eef7] pr-[53px] pl-[46px] text-[35px] font-semibold">
        <span>Gratis hippe vaas t.w.v. € 14,95 bij veldboeket</span>
        <svg width="28" height="44" viewBox="0 0 28 44" fill="none" stroke="#388c22" strokeWidth="8" aria-hidden="true">
          <path d="M4 3l17 19L4 41" />
        </svg>
      </a>

      <header className="border-b-2 border-[#d0d0d0] bg-white px-[39px] pt-[26px]">
        <SearchBar />
        <div className="-mx-[39px] grid h-[126px] grid-cols-3 pt-[13px] pb-[11px] text-[28px] font-semibold">
          <div className="flex items-center justify-end border-r-2 border-[#dadada] pr-[58px]">
            <svg width="82" height="54" viewBox="0 0 82 54" fill="none" stroke="#999" strokeWidth="5.500" className="mr-[34px]" aria-hidden="true">
              <path d="M20 51h43c20 0 21-29 0-31C60-3 33-3 26 14-3 12-5 50 20 51z" />
            </svg>
            22 °C
          </div>
          <div className="flex items-center justify-center border-r-2 border-[#dadada]">0,0 mm</div>
          <div className="flex items-center justify-center">ZZO1</div>
        </div>
      </header>

      <main>
        <div className="relative">
          <RadarMap />
          <span className="absolute top-[48px] left-[51px] text-[44px] leading-[48px] font-bold text-white [text-shadow:3px_3px_4px_#000]">16:00</span>
          <MapControls />
          <LayerSelect />
        </div>
        <RainChart />
      </main>

      <TabBar />
    </div>
  );
}
